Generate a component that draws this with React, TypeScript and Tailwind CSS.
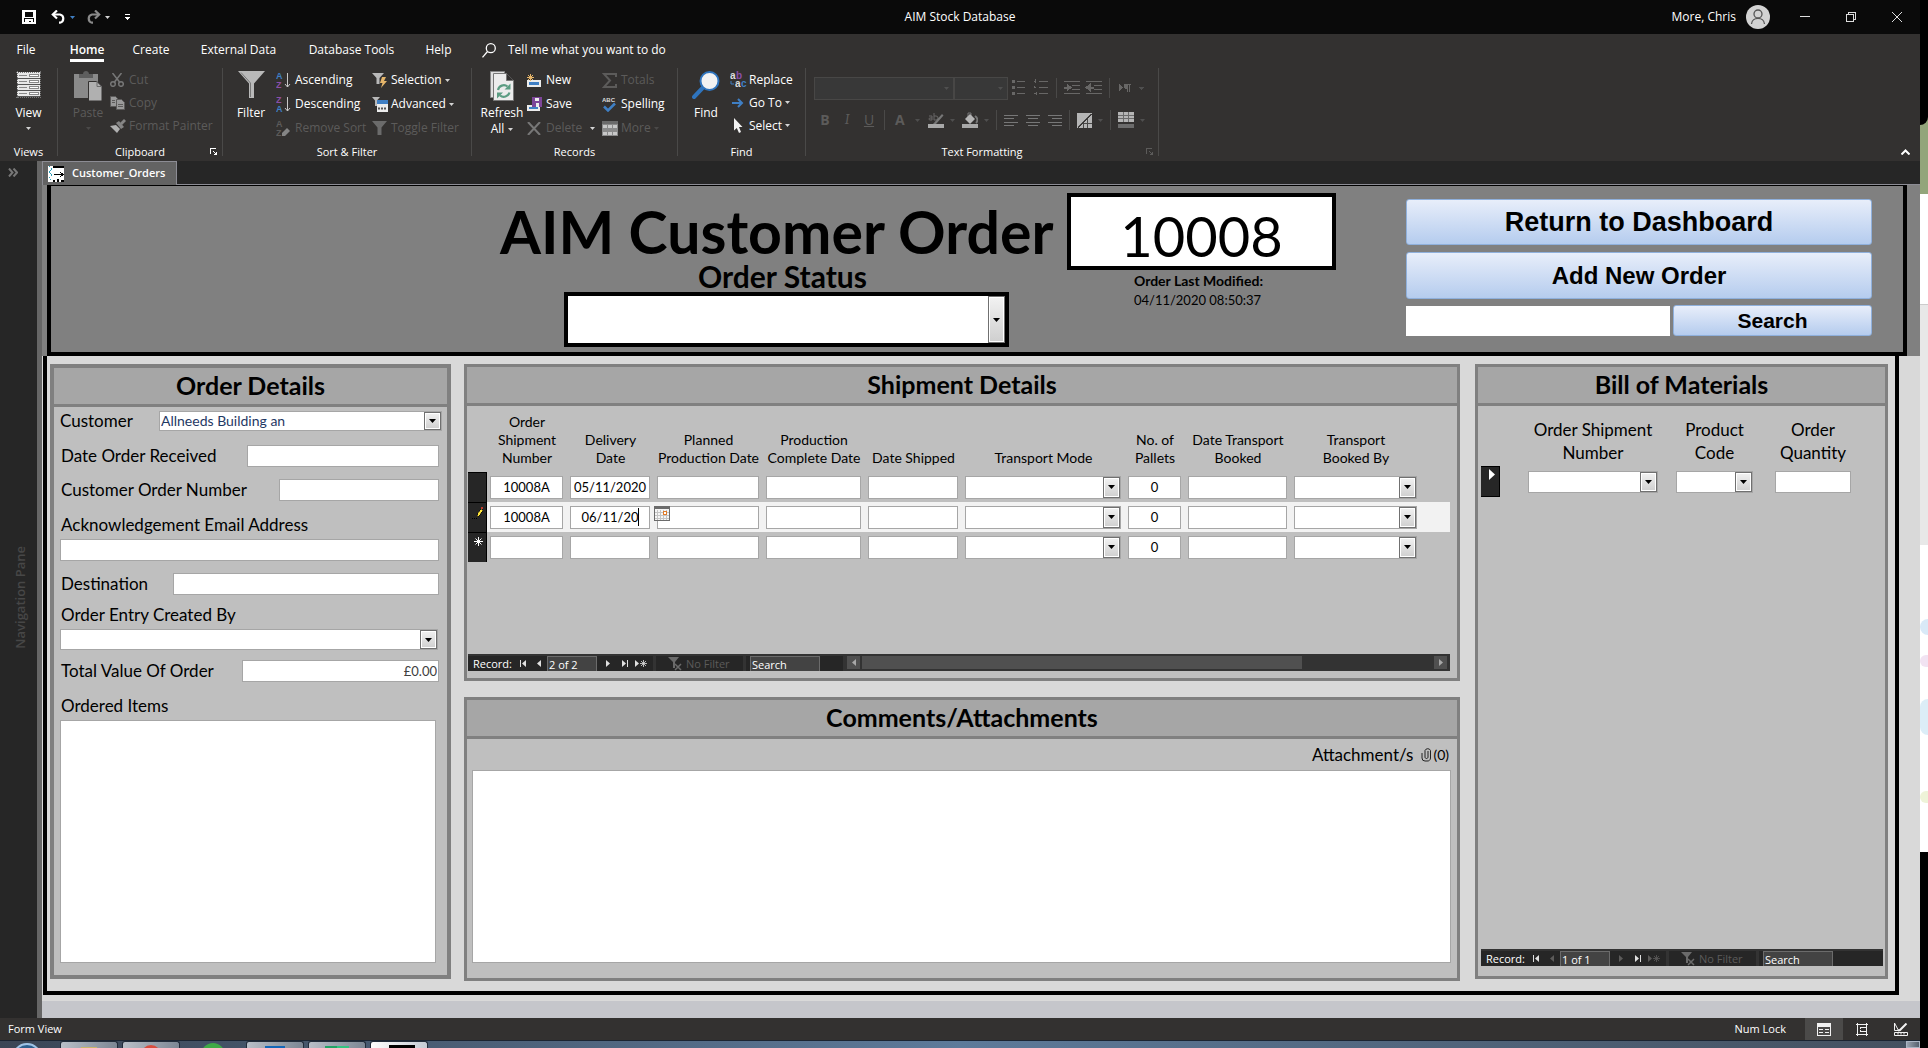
import type { ReactNode } from "react";

type NavBarProps = {
  position: string;
  first?: boolean;
  scroll?: boolean;
};

const DIM = "#5c5b5a";

function Caret({ color = "#d4d4d4" }: { color?: string }) {
  return (
    <svg width="5" height="3" viewBox="0 0 5 3" className="shrink-0">
      <path d="M0 0h5L2.5 3z" fill={color} />
    </svg>
  );
}

/* ---------- Title bar ---------- */

function TitleBar() {
  return (
    <header className="grid h-[34px] shrink-0 grid-cols-3 items-center bg-[#0a0a0a] text-xs text-white">
      <div className="flex items-center pl-[22px]">
        <button aria-label="Save" className="mr-[15px]">
          <svg width="14" height="14" viewBox="0 0 14 14" fill="none" stroke="#fff" strokeWidth="2" shapeRendering="crispEdges">
            <path d="M1 1h12v12H1z" />
            <path d="M1 7.5h12M2.500 1v6M11.500 1v6" strokeWidth="1" />
            <path d="M3 9h8v4H9v-2H7v2H3z" fill="#fff" stroke="none" />
          </svg>
        </button>
        <button aria-label="Undo" className="mr-1">
          <svg width="15" height="14" viewBox="0 0 15 14" fill="none" stroke="#fff" strokeWidth="2.200">
            <path d="M2 4.500h7a4.200 4.200 0 0 1 0 8.200H8" />
            <path d="M6 .5 1.800 4.500 6 8.500" />
          </svg>
        </button>
        <button aria-label="Undo list" className="mr-[11px]"><Caret color="#3f7fc4" /></button>
        <button aria-label="Redo" className="mr-1">
          <svg width="15" height="14" viewBox="0 0 15 14" fill="none" stroke="#8a8a8a" strokeWidth="2.200">
            <path d="M13 4.500H6a4.200 4.200 0 0 0 0 8.200h1" />
            <path d="M9 .5l4.200 4L9 8.500" />
          </svg>
        </button>
        <button aria-label="Redo list" className="mr-[15px]"><Caret /></button>
        <button aria-label="Customize toolbar">
          <svg width="5" height="6" viewBox="0 0 5 6" fill="#fff" shapeRendering="crispEdges">
            <path d="M0 0h5v1H0z" />
            <path d="M0 3h5L2.500 6z" />
          </svg>
        </button>
      </div>
      <div className="text-center">AIM Stock Database</div>
      <div className="flex items-center justify-end pr-[18px]">
        <span className="mr-2.5">More, Chris</span>
        <svg width="24" height="24" viewBox="0 0 24 24" fill="none" stroke="#555" strokeWidth="1.300" className="mr-[30px]">
          <circle cx="12" cy="12" r="12" fill="#d2d2d2" stroke="none" />
          <circle cx="12" cy="9" r="4" />
          <path d="M5.500 19c.5-7.500 12.500-7.500 13 0" />
        </svg>
        <button aria-label="Minimize" className="mr-9">
          <svg width="10" height="10" viewBox="0 0 10 10" stroke="#ddd"><path d="M0 4.500h10" /></svg>
        </button>
        <button aria-label="Restore" className="mr-9">
          <svg width="10" height="10" viewBox="0 0 10 10" fill="none" stroke="#ddd" shapeRendering="crispEdges">
            <path d="M.5 2.500h7v7h-7zM2.500 2.500v-2h7v7h-2" />
          </svg>
        </button>
        <button aria-label="Close">
          <svg width="10" height="10" viewBox="0 0 10 10" stroke="#ddd"><path d="M0 0l10 10M10 0L0 10" /></svg>
        </button>
      </div>
    </header>
  );
}

/* ---------- Ribbon ---------- */

const tabs = [
  { name: "File", width: "w-[52px]" },
  { name: "Home", width: "w-[70px]" },
  { name: "Create", width: "w-[58px]" },
  { name: "External Data", width: "w-[117px]" },
  { name: "Database Tools", width: "w-[109px]" },
  { name: "Help", width: "w-[65px]" },
];

function RibbonTabs() {
  return (
    <nav className="flex h-8 items-center text-xs">
      {tabs.map((tab) => (
        <button key={tab.name} className={`${tab.width} flex h-8 justify-center`}>
          <span
            className={
              tab.name === "Home"
                ? "h-7 border-b-[3px] border-white pt-2 font-semibold"
                : "h-7 pt-2"
            }
          >
            {tab.name}
          </span>
        </button>
      ))}
      <button className="ml-[11px] flex items-center gap-3">
        <svg width="14" height="15" viewBox="0 0 14 15" fill="none" stroke="#fff" strokeWidth="1.300">
          <circle cx="8.800" cy="5.200" r="4.500" />
          <path d="M5.500 8.500.5 14.300" />
        </svg>
        Tell me what you want to do
      </button>
    </nav>
  );
}

function Launcher({ color }: { color: string }) {
  return (
    <svg width="8" height="8" viewBox="0 0 8 8" fill="none" stroke={color} shapeRendering="crispEdges">
      <path d="M.5 6V.5H6M3 3l3 3" />
      <path d="M7 3v4H3z" fill={color} stroke="none" />
    </svg>
  );
}

type GroupProps = {
  label: string;
  width: string;
  launcher?: string;
  children: ReactNode;
};

function Group({ label, width, launcher, children }: GroupProps) {
  return (
    <section className={`${width} relative flex h-[88px] shrink-0 flex-col border-r border-[#4a4948]`}>
      <div className="flex h-[76px] shrink-0 items-start">{children}</div>
      <div className="shrink-0 text-center text-[11px] leading-4">{label}</div>
      {launcher && (
        <button aria-label={`${label} options`} className="absolute right-1 bottom-0">
          <Launcher color={launcher} />
        </button>
      )}
    </section>
  );
}

type BigButtonProps = {
  label: string;
  width: string;
  icon: ReactNode;
  dim?: boolean;
  caret?: "below" | "all";
};

function BigButton({ label, width, icon, dim, caret }: BigButtonProps) {
  return (
    <button className={`${width} flex flex-col items-center pt-[3px] leading-4 ${dim ? "text-[#5c5b5a]" : ""}`}>
      <span className="flex h-[34px] items-start">{icon}</span>
      <span>{label}</span>
      {caret === "below" && (
        <span className="pt-1.5">
          <Caret color={dim ? "#4a4948" : "#d4d4d4"} />
        </span>
      )}
      {caret === "all" && (
        <span className="flex items-center gap-1">
          All <Caret />
        </span>
      )}
    </button>
  );
}

type SmallButtonProps = {
  label: string;
  icon: ReactNode;
  dim?: boolean;
  caret?: "near" | "far";
  tall?: boolean;
};

function SmallButton({ label, icon, dim, caret, tall }: SmallButtonProps) {
  return (
    <button
      className={`flex items-center whitespace-nowrap ${tall ? "h-6" : "h-[23px]"} ${dim ? "text-[#5c5b5a]" : ""}`}
    >
      <span className="flex w-[19px] items-center">{icon}</span>
      {label}
      {caret && (
        <span className={caret === "far" ? "ml-2" : "ml-[3px]"}>
          <Caret color={dim && caret === "near" ? "#4a4948" : "#d4d4d4"} />
        </span>
      )}
    </button>
  );
}

function SortIcon({ top, bottom, topColor, bottomColor, erase }: {
  top: string;
  bottom: string;
  topColor: string;
  bottomColor: string;
  erase?: boolean;
}) {
  return (
    <svg width="15" height="17" viewBox="0 0 15 17" fontFamily="Liberation Sans" fontSize="9" fontWeight="700">
      <text x="0" y="7" fill={topColor}>{top}</text>
      <text x="0" y="16" fill={bottomColor}>{bottom}</text>
      {erase ? (
        <path d="M6 13l5-5 3 3-5 5H6z" fill="#858585" />
      ) : (
        <path d="M11.500 1v14M9 12l2.500 3L14 12" fill="none" stroke="#c8c8c8" />
      )}
    </svg>
  );
}

function ViewIcon() {
  return (
    <svg width="25" height="27" viewBox="0 0 25 27" shapeRendering="crispEdges">
      <path d="M1 1h23v25H1z" fill="#e8e8e8" />
      <path d="M1 0v27M24 0v27M0 1h25M0 26h25" stroke="#777" strokeDasharray="1 1" />
      {[3, 9, 15, 21].map((y) => (
        <g key={y}>
          <path d={`M3 ${y + 1}.500h8`} stroke="#888" />
          <path d={`M13.500 ${y}.500h9v2h-9z`} fill="#fff" stroke="#888" />
          <path d={`M1 ${y + 4}.500h23`} stroke="#555" />
        </g>
      ))}
    </svg>
  );
}

function PasteIcon() {
  return (
    <svg width="28" height="30" viewBox="0 0 28 30">
      <path d="M0 3h24v8H14v16H0z" fill="#8a8a8a" />
      <path d="M5 3h4c0-4 6-4 6 0h4v4H5z" fill="#5e5e5e" />
      <path d="M14.500 10.500h8.500l5 5V30H14.500z" fill="#b0b0b0" stroke="#333130" />
      <path d="M23 10v5.500h5" fill="none" stroke="#6b6b6b" />
    </svg>
  );
}

function FunnelIcon() {
  return (
    <svg width="27" height="27" viewBox="0 0 27 27">
      <path d="M0 0h27L16 12.500V27h-5V12.500z" fill="#b9b9b9" />
      <path d="M3 1.500l9.500 10.500v14" fill="none" stroke="#777" />
    </svg>
  );
}

function RefreshIcon() {
  return (
    <svg width="24" height="30" viewBox="0 0 24 30">
      <path d="M.5.500h14v26H.5z" fill="#e0e0e0" stroke="#888" />
      <path d="M3.500 2.500h13l7 7v20h-20z" fill="#ececec" stroke="#777" />
      <path d="M16.500 2.500v7h7" fill="#333130" stroke="#777" />
      <path d="M8 19a6 6 0 0 1 9.500-3.500M19.500 21.500A6 6 0 0 1 10 24.500" fill="none" stroke="#5b9c82" strokeWidth="2.200" />
      <path d="M20.500 12.500v6H14.500zM7 27.500v-6h6z" fill="#5b9c82" />
    </svg>
  );
}

function FindIcon() {
  return (
    <svg width="28" height="28" viewBox="0 0 28 28">
      <path d="M11.500 16 2 26" stroke="#2f74bd" strokeWidth="4" strokeLinecap="round" />
      <circle cx="17.500" cy="10" r="9" fill="#f2f2f2" stroke="#2f74bd" strokeWidth="2" />
    </svg>
  );
}

function FormatDivider() {
  return <span className="h-5 w-px bg-[#4a4948]" />;
}

function AlignIcon({ lines }: { lines: string }) {
  return (
    <svg width="14" height="11" viewBox="0 0 14 11" stroke="#777" shapeRendering="crispEdges">
      <path d={lines} />
    </svg>
  );
}

function TextFormatting() {
  return (
    <div className="w-full pt-2 pl-2">
      <div className="flex h-6 items-center">
        <div className="relative flex">
          <select disabled aria-label="Font" className="h-[23px] w-[140px] appearance-none border border-[#484746] bg-[#383838]" />
          <span className="absolute top-2.5 right-[5px]"><Caret color="#4f4f4f" /></span>
        </div>
        <div className="relative flex">
          <select disabled aria-label="Font size" className="h-[23px] w-[54px] appearance-none border border-[#484746] bg-[#383838]" />
          <span className="absolute top-2.5 right-[5px]"><Caret color="#4f4f4f" /></span>
        </div>
        <svg width="137" height="20" viewBox="0 0 137 20" className="ml-1" fill="none" stroke="#686766" shapeRendering="crispEdges">
          <path d="M5 3.500h8M5 9.500h8M5 15.500h8M27 3.500h9M27 9.500h9M27 15.500h9" />
          <path d="M0 3.500h3M0 9.500h3M0 15.500h3" strokeWidth="3" />
          <path d="M22 3.500h2M22 9.500h2M22 15.500h2M23.500 1v4M22 8v1M24 14v3" />
          <path d="M44.500 0v20M97.500 0v20" stroke="#4a4948" />
          <path d="M52 3.500h16M60 7.500h8M60 11.500h8M52 15.500h16" />
          <path d="M52 9.500h4" strokeWidth="2" />
          <path d="M55 6l4 3.500-4 3.500z" fill="#686766" />
          <path d="M74 3.500h16M82 7.500h8M82 11.500h8M74 15.500h16" />
          <path d="M78 9.500h4" strokeWidth="2" />
          <path d="M78 6l-4 3.500 4 3.500z" fill="#686766" />
          <path d="M107 5l4 4.500-4 4.500z" fill="#686766" stroke="none" />
          <path d="M119 6.500h-5M117.500 6v8M115.500 6v8" />
          <path d="M112 6h3v5h-2l-1-2z" fill="#686766" stroke="none" />
          <path d="M127 9h5l-2.500 3z" fill="#4f4f4f" stroke="none" />
        </svg>
      </div>
      <div className="mt-2 flex h-6 items-center text-sm text-[#5c5b5a]">
        <button aria-label="Bold" className="w-[22px] text-center font-bold">B</button>
        <button aria-label="Italic" className="w-[22px] text-center font-serif italic">I</button>
        <button aria-label="Underline" className="w-[22px] text-center underline">U</button>
        <span className="mr-2.5 ml-1 flex"><FormatDivider /></span>
        <button aria-label="Font color" className="mr-2.5 font-bold">A</button>
        <Caret color="#4f4f4f" />
        <button aria-label="Highlight" className="mr-1.5 ml-2">
          <svg width="16" height="16" viewBox="0 0 16 16">
            <path d="M1 4h3v4H2a1 1 0 0 1 0-2h2M6 1v7h2a2 2 0 0 0 0-4H6" fill="none" stroke="#686766" />
            <path d="M5 12 14 2l1.500 1.500L8 12z" fill="#777" />
            <path d="M0 12h16v4H0z" fill="#a8a8a8" />
          </svg>
        </button>
        <Caret color="#4f4f4f" />
        <button aria-label="Background color" className="mr-1.5 ml-[7px]">
          <svg width="16" height="16" viewBox="0 0 16 16">
            <path d="M6 5V1h3v3" fill="none" stroke="#777" />
            <path d="M8 2l5 5-5 5-5-5z" fill="#b5b5b5" />
            <path d="M13 4c3 2 3 5 1 7" stroke="#777" fill="none" strokeWidth="2" />
            <path d="M0 12h16v4H0z" fill="#a8a8a8" />
          </svg>
        </button>
        <Caret color="#4f4f4f" />
        <span className="mr-[7px] ml-[7px] flex"><FormatDivider /></span>
        <div className="flex gap-2">
          <button aria-label="Align left"><AlignIcon lines="M0 .5h14M0 3.500h10M0 7.500h14M0 10.500h10" /></button>
          <button aria-label="Center"><AlignIcon lines="M0 .5h14M2 3.500h10M0 7.500h14M2 10.500h10" /></button>
          <button aria-label="Align right"><AlignIcon lines="M0 .5h14M4 3.500h10M0 7.500h14M4 10.500h10" /></button>
        </div>
        <span className="mr-[7px] ml-[7px] flex"><FormatDivider /></span>
        <button aria-label="Gridlines" className="mr-1.5">
          <svg width="15" height="15" viewBox="0 0 15 15" shapeRendering="crispEdges">
            <path d="M0 0h15L0 15z" fill="#b5b5b5" />
            <path d="M15 1v14H1z" fill="#b5b5b5" />
            <path d="M14 1 1 14M7 10.500h8M10.500 6v9M6.500 10v5" stroke="#4a4948" />
          </svg>
        </button>
        <Caret color="#4f4f4f" />
        <span className="mr-[7px] ml-[7px] flex"><FormatDivider /></span>
        <button aria-label="Alternate row color" className="mr-1.5">
          <svg width="16" height="16" viewBox="0 0 16 16" shapeRendering="crispEdges">
            <path d="M0 0h16v10H0z" fill="#b5b5b5" />
            <path d="M0 3.500h16M0 6.500h16M5.500 0v10M10.500 0v10" stroke="#6b6b6b" />
            <path d="M0 12h16v4H0z" fill="#6b6b6b" />
          </svg>
        </button>
        <Caret color="#4f4f4f" />
      </div>
    </div>
  );
}

function Ribbon() {
  return (
    <div className="relative flex h-[127px] shrink-0 flex-col bg-[#333130] text-xs text-white">
      <RibbonTabs />
      <div className="mt-0.5 flex">
        <Group label="Views" width="w-[58px]">
          <BigButton label="View" width="w-[57px]" caret="below" icon={<ViewIcon />} />
        </Group>

        <Group label="Clipboard" width="w-[165px]" launcher="#fff">
          <BigButton label="Paste" width="ml-3 w-[36px]" dim caret="below" icon={<PasteIcon />} />
          <div className="ml-1">
            <SmallButton
              label="Cut"
              dim
              icon={
                <svg width="14" height="14" viewBox="0 0 14 14" fill="none" stroke="#777" strokeWidth="1.500">
                  <path d="M2.500 0l7 9M11.500 0l-7 9" />
                  <circle cx="3" cy="11" r="2.300" />
                  <circle cx="11" cy="11" r="2.300" />
                </svg>
              }
            />
            <SmallButton
              label="Copy"
              dim
              icon={
                <svg width="15" height="14" viewBox="0 0 15 14" fill="#9a9a9a" stroke="#5c5b5a">
                  <path d="M.5.500h5l3 3v7h-8z" />
                  <path d="M6.500 3.500h5l3 3v7h-8z" />
                  <path d="M2 4.500h3M2 6.500h3M8 8.500h5M8 10.500h5" />
                </svg>
              }
            />
            <SmallButton
              label="Format Painter"
              dim
              icon={
                <svg width="16" height="14" viewBox="0 0 16 14">
                  <path d="M0 7l6-1 4 4-3 4z" fill="#b0b0b0" />
                  <path d="M6 4l3-2 5 6-3 2z" fill="#858585" />
                  <path d="M10 4l4-4 2 2-4 4z" fill="#858585" />
                </svg>
              }
            />
          </div>
        </Group>

        <Group label="Sort & Filter" width="w-[249px]">
          <BigButton label="Filter" width="ml-2 w-10" icon={<FunnelIcon />} />
          <div className="ml-[5px] w-[96px]">
            <SmallButton tall label="Ascending" icon={<SortIcon top="A" bottom="Z" topColor="#3f7fc4" bottomColor="#8b4fa8" />} />
            <SmallButton tall label="Descending" icon={<SortIcon top="Z" bottom="A" topColor="#8b4fa8" bottomColor="#3f7fc4" />} />
            <SmallButton tall dim label="Remove Sort" icon={<SortIcon top="A" bottom="Z" topColor={DIM} bottomColor={DIM} erase />} />
          </div>
          <div>
            <SmallButton
              tall
              label="Selection"
              caret="near"
              icon={
                <svg width="16" height="15" viewBox="0 0 16 15">
                  <path d="M0 0h12L7.500 5v6h-3V5z" fill="#b9b9b9" />
                  <path d="M10 4h4l-2 4h3l-6 7 1.500-5H8z" fill="#e5b56a" />
                </svg>
              }
            />
            <SmallButton
              tall
              label="Advanced"
              caret="near"
              icon={
                <svg width="16" height="15" viewBox="0 0 16 15">
                  <path d="M0 0h8L5 3.500V9H3V3.500z" fill="#b9b9b9" />
                  <path d="M5 3h11v12H5z" fill="#ececec" />
                  <path d="M5 3h11v4H5z" fill="#3f7fc4" />
                  <path d="M6 11.500h8" stroke="#555" strokeWidth="2" strokeDasharray="2 1" />
                </svg>
              }
            />
            <SmallButton tall dim label="Toggle Filter" icon={<svg width="15" height="14" viewBox="0 0 15 14"><path d="M0 0h15L9.500 6.500V14h-4V6.500z" fill="#6b6b6b" /></svg>} />
          </div>
        </Group>

        <Group label="Records" width="w-[206px]">
          <BigButton label="Refresh" width="ml-[7px] w-[46px]" caret="all" icon={<RefreshIcon />} />
          <div className="ml-0.5 w-[75px]">
            <SmallButton
              tall
              label="New"
              icon={
                <svg width="14" height="13" viewBox="0 0 14 13">
                  <path d="M0 6h14v7H0z" fill="#ececec" />
                  <path d="M2 8h10v3H2z" fill="#3f7fc4" />
                  <path d="M3.500 0v7M0 3.500h7M1 1l5 5M6 1 1 6" stroke="#e5b56a" />
                </svg>
              }
            />
            <SmallButton
              tall
              label="Save"
              icon={
                <svg width="15" height="15" viewBox="0 0 15 15">
                  <path d="M0 8h13v6H0z" fill="#ececec" />
                  <path d="M2 10h9v2H2z" fill="#3f7fc4" />
                  <path d="M5 0h10v10H5z" fill="#7d4699" />
                  <path d="M8 1h4v3H8zM9 6h3v4H9z" fill="#ececec" />
                </svg>
              }
            />
            <SmallButton tall dim label="Delete" caret="far" icon={<svg width="14" height="13" viewBox="0 0 14 13" stroke="#777" strokeWidth="2"><path d="M1 0l12 13M13 0 1 13" /></svg>} />
          </div>
          <div>
            <SmallButton tall dim label="Totals" icon={<svg width="15" height="15" viewBox="0 0 15 15" fill="none" stroke="#5c5b5a" strokeWidth="2"><path d="M14 4V1H2l6 6.500L2 14h12v-3" /></svg>} />
            <SmallButton
              tall
              label="Spelling"
              icon={
                <svg width="15" height="16" viewBox="0 0 15 16">
                  <text x="0" y="6" fontSize="6" fontWeight="700" fontFamily="Liberation Sans" fill="#ddd">ABC</text>
                  <path d="M2 10.500l4 4L13 7.500" fill="none" stroke="#3f7fc4" strokeWidth="2.500" />
                </svg>
              }
            />
            <SmallButton
              tall
              dim
              label="More"
              caret="near"
              icon={
                <svg width="16" height="15" viewBox="0 0 16 15" shapeRendering="crispEdges">
                  <path d="M0 0h16v15H0z" fill="#8a8a8a" />
                  <path d="M0 0h16v3H0z" fill="#6b6b6b" />
                  <path d="M1 5.500h14M1 12.500h14" stroke="#c8c8c8" strokeWidth="3" strokeDasharray="4 1" />
                </svg>
              }
            />
          </div>
        </Group>

        <Group label="Find" width="w-[128px]">
          <BigButton label="Find" width="ml-2 w-[40px]" icon={<FindIcon />} />
          <div className="ml-1">
            <SmallButton
              label="Replace"
              icon={
                <svg width="17" height="17" viewBox="0 0 17 17" fontFamily="Liberation Sans" fontSize="10" fontWeight="700">
                  <text x="0" y="8" fill="#ddd">a</text>
                  <text x="6" y="8" fill="#8b4fa8">b</text>
                  <text x="5" y="16" fill="#ddd">a</text>
                  <text x="11" y="16" fill="#3f7fc4">c</text>
                  <path d="M1 10v3h3" fill="none" stroke="#3f7fc4" />
                </svg>
              }
            />
            <SmallButton label="Go To" caret="near" icon={<svg width="14" height="10" viewBox="0 0 14 10" fill="none" stroke="#3f7fc4" strokeWidth="2"><path d="M2 5h10M8 1l4 4-4 4" /></svg>} />
            <SmallButton label="Select" caret="near" icon={<svg width="14" height="15" viewBox="0 0 14 15"><path d="M4 0l8.500 9H9l2 5-2 1-2.200-5L4 12.500z" fill="#f2f2f2" /></svg>} />
          </div>
        </Group>

        <Group label="Text Formatting" width="w-[353px]" launcher={DIM}>
          <TextFormatting />
        </Group>
      </div>
      <button aria-label="Collapse the ribbon" className="absolute right-2.5 bottom-1.5">
        <svg width="9" height="6" viewBox="0 0 9 6" fill="none" stroke="#fff" strokeWidth="2">
          <path d="M.5 5.500l4-4 4 4" />
        </svg>
      </button>
    </div>
  );
}

/* ---------- Form controls ---------- */

type ComboProps = {
  label: string;
  id?: string;
  className: string;
  value?: string;
};

function ComboArrow() {
  return (
    <span className="pointer-events-none absolute top-0 right-0 bottom-0 flex w-[17px] items-center justify-center border border-[#707070] bg-linear-to-b from-[#f2f2f2] to-[#cfcfcf] ring-1 ring-white ring-inset">
      <svg width="7" height="4" viewBox="0 0 7 4"><path d="M0 0h7L3.500 4z" /></svg>
    </span>
  );
}

function Combo({ label, id, className, value }: ComboProps) {
  return (
    <div className={`${className} relative border border-[#a6a6a6] bg-white`}>
      <select
        id={id}
        aria-label={id ? undefined : label}
        className="block h-full w-full appearance-none pl-px text-sm leading-4 text-[#1f3864] outline-none"
      >
        <option>{value}</option>
      </select>
      <ComboArrow />
    </div>
  );
}

const fieldClass = "border border-[#a6a6a6] bg-white outline-none";

type FieldRowProps = {
  id: string;
  label: string;
  width: string;
  value?: string;
};

function FieldRow({ id, label, width, value }: FieldRowProps) {
  return (
    <div className="mr-[3px] flex h-[22px] items-center justify-between">
      <label htmlFor={id} className="pl-px">{label}</label>
      <input id={id} defaultValue={value} className={`${fieldClass} ${width} h-[22px] pr-px text-right text-[13px] text-[#404040]`} />
    </div>
  );
}

function PanelTitle({ children }: { children: ReactNode }) {
  return (
    <h2 className="flex h-[39px] shrink-0 items-center justify-center border-b-[3px] border-[#808080] bg-[#a6a6a6] pb-0.5 text-[25px] leading-7 font-bold">
      {children}
    </h2>
  );
}

function NavBar({ position, first, scroll }: NavBarProps) {
  const back = first ? "#5c5b5a" : "#e0e0e0";
  return (
    <div className="flex h-[17px] shrink-0 bg-[#333] pt-0.5 font-['Open_Sans','Noto_Sans',sans-serif] text-[11px] leading-[15px] text-white">
      <div className="flex items-center bg-[#262626] pl-[5px]">
        <span className="w-[42px]">Record:</span>
        <button aria-label="First record" className="w-4">
          <svg width="7" height="7" viewBox="0 0 7 7" fill="#e0e0e0" className="mx-auto"><path d="M0 0h1v7H0zM6 0v7L2 3.500z" /></svg>
        </button>
        <button aria-label="Previous record" className="w-4">
          <svg width="4" height="7" viewBox="0 0 4 7" fill={back} className="mx-auto"><path d="M4 0v7L0 3.500z" /></svg>
        </button>
        <input aria-label="Current record" defaultValue={position} className="h-[15px] w-[50px] border border-b-0 border-[#6b6b6b] bg-[#434343] pl-px outline-none" />
        <button aria-label="Next record" className="w-[22px]">
          <svg width="4" height="7" viewBox="0 0 4 7" fill={back} className="mx-auto"><path d="M0 0v7l4-3.500z" /></svg>
        </button>
        <button aria-label="Last record" className="w-3">
          <svg width="6" height="7" viewBox="0 0 6 7" fill="#e0e0e0" className="mx-auto"><path d="M5 0h1v7H5zM0 0v7l4-3.500z" /></svg>
        </button>
        <button aria-label="New record" className="mr-1 w-[18px] pl-1">
          <svg width="12" height="7" viewBox="0 0 12 7" fill={back} stroke={back}>
            <path d="M0 0v7l4-3.500z" stroke="none" />
            <path d="M8.500 0v7M5 3.500h7M6 1l5 5M11 1 6 6" strokeWidth=".8" />
          </svg>
        </button>
      </div>
      <div className="ml-[3px] flex w-[87px] shrink-0 items-center bg-[#262626] pl-3 text-[#5c5b5a]">
        <svg width="14" height="14" viewBox="0 0 14 14" className="mr-1 shrink-0">
          <path d="M0 0h11L7 5v6H5V5z" fill="#6b6b6b" />
          <path d="M7 7l6 6M13 7l-6 6" stroke="#6b6b6b" strokeWidth="1.500" />
        </svg>
        <span className="whitespace-nowrap">No Filter</span>
      </div>
      <div className={`${scroll ? "w-[97px]" : "flex-1"} ml-[3px] flex bg-[#262626] pl-1`}>
        <input aria-label="Search records" defaultValue="Search" className="h-[15px] w-[70px] border border-b-0 border-[#6b6b6b] bg-[#434343] pl-px outline-none" />
      </div>
      {scroll && (
        <div className="flex h-[13px] flex-1 pr-[3px] pl-1">
          <button aria-label="Scroll left" className="mr-0.5 flex w-[13px] items-center justify-center bg-[#505050]">
            <svg width="4" height="7" viewBox="0 0 4 7" fill="#a8a8a8"><path d="M4 0v7L0 3.500z" /></svg>
          </button>
          <div className="flex-1"><div className="h-full w-[77%] bg-[#505050]" /></div>
          <button aria-label="Scroll right" className="flex w-[13px] items-center justify-center bg-[#505050]">
            <svg width="4" height="7" viewBox="0 0 4 7" fill="#a8a8a8"><path d="M0 0v7l4-3.500z" /></svg>
          </button>
        </div>
      )}
    </div>
  );
}

/* ---------- Form header ---------- */

const actionClass =
  "rounded-[3px] border border-[#8fb0dc] bg-linear-to-b from-[#e8eefa] to-[#b5ccee] font-['Liberation_Sans',sans-serif] font-bold";

function FormHeader() {
  return (
    <div className="shrink-0 bg-[#808080] pr-[13px] pl-[5px]">
      <div className="flex h-[171px] items-start justify-end border-4 border-t border-black pr-[31px]">
        <div className="w-[551px]">
          <h1 className="pt-[18px] text-center text-[59px] leading-[56px] font-bold whitespace-nowrap">AIM Customer Order</h1>
          <div className="ml-16 w-[445px]">
            <label htmlFor="status" className="block pr-2 text-center text-[30px] leading-8 font-bold">Order Status</label>
            <div className="relative h-[55px] border-4 border-black bg-white">
              <select id="status" className="block h-full w-full appearance-none outline-none" />
              <ComboArrow />
            </div>
          </div>
        </div>
        <div className="mt-[7px] ml-4 w-[269px] text-center text-sm">
          <input
            aria-label="Order number"
            defaultValue="10008"
            className="block h-[77px] w-full border-4 border-black bg-white pt-2 text-center text-[56px] outline-none"
          />
          <div className="pr-1.5 leading-[22px] font-bold">Order Last Modified:</div>
          <div className="pr-2 text-[13px] leading-4">04/11/2020 08:50:37</div>
        </div>
        <div className="mt-[13px] ml-[70px] flex w-[466px] flex-col">
          <button className={`${actionClass} h-[46px] text-[27px]`}>Return to Dashboard</button>
          <button className={`${actionClass} mt-[7px] h-[47px] text-2xl`}>Add New Order</button>
          <div className="mt-1.5 flex h-[31px] gap-[3px]">
            <input aria-label="Search orders" className="mt-px w-[264px] bg-white outline-none" />
            <button className={`${actionClass} flex-1 text-[21px] leading-7`}>Search</button>
          </div>
        </div>
      </div>
    </div>
  );
}

/* ---------- Panels ---------- */

function OrderDetails() {
  return (
    <section className="mr-[13px] mb-0.5 flex w-[401px] shrink-0 flex-col border-4 border-[#808080] bg-[#bfbfbf]">
      <PanelTitle>Order Details</PanelTitle>
      <div className="flex flex-1 flex-col pt-1 pr-[5px] pb-3 pl-1.5 text-[17px] leading-6">
        <div className="flex h-5 items-center justify-between">
          <label htmlFor="customer">Customer</label>
          <Combo id="customer" label="Customer" className="h-5 w-[283px]" value="Allneeds Building an" />
        </div>
        <div className="mt-3.5 flex flex-col gap-3">
          <FieldRow id="received" label="Date Order Received" width="w-48" />
          <FieldRow id="number" label="Customer Order Number" width="w-40" />
          <div className="mr-[3px]">
            <label htmlFor="email" className="block pl-px">Acknowledgement Email Address</label>
            <input id="email" className={`${fieldClass} mt-0.5 block h-[22px] w-full text-sm`} />
          </div>
          <FieldRow id="destination" label="Destination" width="w-[266px]" />
        </div>
        <label htmlFor="created" className="mt-2 block pl-px">Order Entry Created By</label>
        <div className="mt-0.5 mb-2.5 flex pr-1">
          <Combo id="created" label="Order Entry Created By" className="h-[21px] flex-1" />
        </div>
        <FieldRow id="total" label="Total Value Of Order" width="w-[197px]" value="£0.00" />
        <label htmlFor="items" className="mt-3 block pl-px">Ordered Items</label>
        <textarea id="items" className={`${fieldClass} mt-0.5 mr-1.5 flex-1 resize-none`} />
      </div>
    </section>
  );
}

const shipmentColumns = [
  { label: "Order Shipment Number", width: "w-[80px]", kind: "text" },
  { label: "Delivery Date", width: "w-[87px] px-4", kind: "text" },
  { label: "Planned Production Date", width: "w-[109px]", kind: "text" },
  { label: "Production Complete Date", width: "w-[102px]", kind: "text" },
  { label: "Date Shipped", width: "w-[97px]", kind: "text" },
  { label: "Transport Mode", width: "w-[163px]", kind: "combo" },
  { label: "No. of Pallets", width: "w-[60px]", kind: "text" },
  { label: "Date Transport Booked", width: "w-[106px]", kind: "text" },
  { label: "Transport Booked By", width: "w-[130px] px-6", kind: "combo" },
];

const shipmentRows = [
  { state: "saved", values: ["10008A", "05/11/2020", "", "", "", "", "0", "", ""] },
  { state: "editing", values: ["10008A", "06/11/20", "", "", "", "", "0", "", ""] },
  { state: "new", values: ["", "", "", "", "", "", "0", "", ""] },
];

function RowMarker({ state }: { state: string }) {
  if (state === "editing") {
    return (
      <svg width="12" height="12" viewBox="0 0 12 12" className="ml-1" shapeRendering="crispEdges">
        <path d="M5 10l1-4 3-4 2 1-3 5z" fill="#ffe53b" stroke="#000" strokeWidth=".5" />
        <path d="M9 0h2v2H9z" fill="#c0392b" />
        <path d="M0 11.500h6" stroke="#000" strokeDasharray="1 1" />
      </svg>
    );
  }
  if (state === "new") {
    return (
      <svg width="9" height="9" viewBox="0 0 9 9" stroke="#fff" className="ml-1.5">
        <path d="M4.500 0v9M0 4.500h9M1.500 1.500l6 6M7.500 1.500l-6 6" />
      </svg>
    );
  }
  return null;
}

function CalendarIcon() {
  return (
    <svg width="16" height="16" viewBox="0 0 16 16" shapeRendering="crispEdges">
      <path d="M.5.500h15v14H.5z" fill="#f5f5f5" stroke="#6b6b6b" />
      <path d="M0 0h16v3H0z" fill="#6b6b6b" />
      <path d="M3.500 4v10M6.500 4v10M9.500 4v10M12.500 4v10M1 6.500h14M1 9.500h14M1 12.500h14" stroke="#c4c4c4" />
      <path d="M9.500 5.500h3v3h-3z" fill="#fff" stroke="#e07b2a" />
    </svg>
  );
}

function ShipmentDetails() {
  return (
    <section className="flex h-[317px] shrink-0 flex-col border-3 border-[#808080] bg-[#bfbfbf]">
      <PanelTitle>Shipment Details</PanelTitle>
      <div className="flex flex-1 flex-col justify-between pr-[7px] pb-[7px] pl-px">
        <table className="w-full table-fixed border-separate border-spacing-0">
          <thead>
            <tr className="h-[66px] align-bottom text-sm leading-[18px]">
              <th className="w-[19px]" />
              {shipmentColumns.map((col) => (
                <th key={col.label} className={`${col.width} pb-[5px] font-normal`}>{col.label}</th>
              ))}
              <th />
            </tr>
          </thead>
          <tbody>
            {shipmentRows.map((row) => (
              <tr key={row.state} className={row.state === "editing" ? "h-[30px] bg-[#f2f2f2]" : "h-[30px]"}>
                <td className="border-t border-r border-black bg-[#262626] p-0 pt-1 align-top">
                  <RowMarker state={row.state} />
                </td>
                {shipmentColumns.map((col, i) => (
                  <td key={col.label} className="relative py-0 pr-1 pl-[3px]">
                    {col.kind === "combo" ? (
                      <Combo label={col.label} className="h-[23px]" />
                    ) : (
                      <input
                        aria-label={col.label}
                        defaultValue={row.values[i]}
                        className={`${fieldClass} block h-[23px] w-full text-center text-[13px]`}
                      />
                    )}
                    {row.state === "editing" && i === 1 && (
                      <>
                        <span className="absolute top-1.5 right-[15px] h-[18px] w-px bg-black" />
                        <button aria-label="Pick a date" className="absolute top-1 -right-4 z-10"><CalendarIcon /></button>
                      </>
                    )}
                  </td>
                ))}
                <td />
              </tr>
            ))}
          </tbody>
        </table>
        <NavBar position="2 of 2" scroll />
      </div>
    </section>
  );
}

function Comments() {
  return (
    <section className="mt-4 flex flex-1 flex-col border-3 border-[#808080] bg-[#bfbfbf]">
      <PanelTitle>Comments/Attachments</PanelTitle>
      <div className="flex flex-1 flex-col pr-1.5 pb-[15px] pl-[5px]">
        <div className="flex h-[31px] items-center justify-end pr-0.5">
          <label htmlFor="comments" className="text-[17px]">Attachment/s</label>
          <button className="ml-2 flex items-center gap-px text-sm">
            <svg width="11" height="15" viewBox="0 0 11 15" fill="none" stroke="#222">
              <path d="M1 6v5a3 3 0 0 0 3 3h2a3 3 0 0 0 3.500-3V3.500a3 3 0 0 0-5.500 0V10c0 2 3 2 3 0V4" />
            </svg>
            (0)
          </button>
        </div>
        <textarea id="comments" className={`${fieldClass} flex-1 resize-none`} />
      </div>
    </section>
  );
}

const materialColumns = [
  { label: "Order Shipment Number", cell: "w-[162px] pr-1 pl-7", kind: "combo" },
  { label: "Product Code", cell: "w-[95px] pr-1 pl-3.5", kind: "combo" },
  { label: "Order Quantity", cell: "w-[98px] pr-1 pl-[18px]", kind: "text" },
];

function BillOfMaterials() {
  return (
    <section className="mb-0.5 ml-[15px] flex w-[413px] shrink-0 flex-col border-3 border-[#808080] bg-[#bfbfbf]">
      <PanelTitle>Bill of Materials</PanelTitle>
      <div className="flex flex-1 flex-col justify-between pr-0.5 pb-2.5 pl-[3px]">
        <table className="w-full table-fixed border-separate border-spacing-0">
          <thead>
            <tr className="h-[60px] align-bottom text-[17px] leading-[23px]">
              <th className="w-[19px]" />
              {materialColumns.map((col) => (
                <th key={col.label} className={`${col.cell} pb-0.5 font-normal`}>{col.label}</th>
              ))}
              <th />
            </tr>
          </thead>
          <tbody>
            <tr className="h-[31px]">
              <td className="border-y border-r border-black bg-[#262626] p-0 pt-0.5 align-top">
                <svg width="6" height="11" viewBox="0 0 6 11" fill="#fff" className="ml-2"><path d="M0 0v11l6-5.500z" /></svg>
              </td>
              {materialColumns.map((col) => (
                <td key={col.label} className={`${col.cell} py-0`}>
                  {col.kind === "combo" ? (
                    <Combo label={col.label} className="h-[22px]" />
                  ) : (
                    <input aria-label={col.label} className={`${fieldClass} block h-[22px] w-full text-[13px]`} />
                  )}
                </td>
              ))}
              <td />
            </tr>
          </tbody>
        </table>
        <NavBar position="1 of 1" first />
      </div>
    </section>
  );
}

/* ---------- Document area ---------- */

function DocumentTab() {
  return (
    <div className="flex h-6 shrink-0 bg-[#262626]">
      <button className="flex w-[135px] items-center gap-2 border border-b-0 border-[#8c8c94] bg-[#636363] pl-[5px] text-[11px] font-semibold text-white">
        <svg width="16" height="16" viewBox="0 0 16 16" shapeRendering="crispEdges">
          <path d="M0 0h16v16H0z" fill="#fff" />
          <path d="M1 0l3 3-3 3 3 3-3 3 3 3" fill="none" stroke="#2a9db8" strokeDasharray="2 1" />
          <path d="M5 0h11v2H5zM5 14h2v2H5zM9 13h2v3H9zM13 14h3v2h-3z" />
          <path d="M6 8.500h9M12 6l3 2.500-3 2.500" fill="none" stroke="#000" />
        </svg>
        Customer_Orders
      </button>
      <div className="flex-1 border-b border-[#8c8c94]" />
    </div>
  );
}

function NavigationPane() {
  return (
    <aside className="flex w-[42px] shrink-0 flex-col border-r-[5px] border-[#666] bg-[#262626]">
      <button aria-label="Open navigation pane" className="mt-[7px] ml-2">
        <svg width="10" height="9" viewBox="0 0 10 9" fill="none" stroke="#777" strokeWidth="2">
          <path d="M1 .5l3.500 4L1 8.500M5.500.500l3.500 4-3.500 4" />
        </svg>
      </button>
      <div className="flex flex-1 items-center justify-center pl-1">
        <span className="rotate-180 text-[13px] font-semibold text-[#474747] [writing-mode:vertical-rl]">Navigation Pane</span>
      </div>
    </aside>
  );
}

/* ---------- Bottom bars ---------- */

function StatusBar() {
  return (
    <footer className="flex h-[22px] shrink-0 items-center justify-between bg-[#333130] pl-2 text-[11px] text-white">
      <span>Form View</span>
      <div className="flex h-full items-center">
        <span className="mr-[19px]">Num Lock</span>
        <button aria-label="Form View" className="flex h-full w-[38px] items-center justify-center bg-[#4b4a49]">
          <svg width="14" height="13" viewBox="0 0 14 13" fill="none" stroke="#f2f2f2" shapeRendering="crispEdges">
            <path d="M.5.500h13v12H.5zM2 6.500h4M8 6.500h4M2 9.500h4M8 9.500h4" />
            <path d="M0 0h14v4H0z" fill="#f2f2f2" stroke="none" />
          </svg>
        </button>
        <button aria-label="Layout View" className="flex h-full w-[38px] items-center justify-center">
          <svg width="12" height="13" viewBox="0 0 12 13" fill="none" stroke="#f2f2f2" shapeRendering="crispEdges">
            <path d="M0 1.500h12M0 11.500h12M1.500 0v13M10.500 0v13M4 4.500h6M4 8.500h6M4.500 4v2M4.500 7v2" />
          </svg>
        </button>
        <button aria-label="Design View" className="flex h-full w-[39px] items-center justify-center">
          <svg width="14" height="13" viewBox="0 0 14 13" fill="none" stroke="#f2f2f2">
            <path d="M.5 0v7.500h4zM.5 9.500h13v3H.5zM4 10v1.500M7 10v1.500M10 10v1.500" />
            <path d="M12.500.500 6 7l-2 .5" strokeWidth="2" />
          </svg>
        </button>
      </div>
    </footer>
  );
}

const taskButtonClass = "flex w-[58px] justify-center overflow-hidden rounded-t-[3px] border border-b-0 border-[#222c3a] bg-linear-to-r from-[#b9bfc8] to-[#7d8794]";

function Taskbar() {
  return (
    <div className="flex h-2 shrink-0 gap-1 overflow-hidden border-t border-[#1b2431] bg-linear-to-r from-[#3b4656] via-[#5d7a9a] to-[#44505f]">
      <div className="w-14">
        <div className="mt-0.5 ml-3 size-[30px] rounded-full border-2 border-[#9fc3e6] bg-[#2d5f8e]" />
      </div>
      <div className={taskButtonClass}><div className="mt-[5px] h-2 w-4 bg-[#c9b56a]" /></div>
      <div className={taskButtonClass}><div className="mt-[3px] size-5 shrink-0 rounded-full bg-[#d94c3d]" /></div>
      <div className="flex w-[58px] justify-center"><div className="mt-0.5 size-6 shrink-0 rounded-full bg-[#3faa46]" /></div>
      <div className={taskButtonClass}><div className="mt-1 h-2 w-5 bg-[#1266b8]" /></div>
      <div className={taskButtonClass}><div className="mt-1 h-2 w-6 bg-linear-to-r from-[#21a366] from-50% to-[#33c481] to-50%" /></div>
      <div className="flex w-[58px] justify-end rounded-t-[3px] border border-b-0 border-[#222c3a] bg-linear-to-r from-white to-[#c5cbd4] pr-3">
        <div className="mt-[3px] h-2 w-[26px] bg-black" />
      </div>
      <div className="flex-1" />
      <div className="w-[14px] border border-[#aab4c4] bg-linear-to-r from-[#9aa3b0] to-[#56606e]" />
    </div>
  );
}

// Sliver of the window that sits behind this one
function BackgroundWindow() {
  return (
    <div className="flex w-2 shrink-0 flex-col bg-black">
      <div className="h-[194px] bg-[#93a57b]">
        <div className="h-[125px] rounded-br-lg bg-black" />
      </div>
      <div className="h-[111px] border-b border-[#ccc] bg-white" />
      <div className="h-[240px] bg-[#e8e8e8]" />
      <div className="flex h-[307px] flex-col bg-white pt-[74px]">
        <div className="h-4 rounded-l-full bg-[#d9e9f7]" />
        <div className="mt-5 h-3 rounded-l-full bg-[#f1e3f2]" />
        <div className="mt-8 h-9 rounded-l-full bg-[#dcedf7]" />
        <div className="mt-14 h-3 rounded-l-full bg-[#eef3d8]" />
      </div>
    </div>
  );
}

export default function App() {
  return (
    <div className="flex h-screen w-full overflow-hidden font-['Open_Sans','Noto_Sans',sans-serif]">
      <div className="flex min-w-0 flex-1 flex-col">
        <TitleBar />
        <Ribbon />
        <div className="flex min-h-0 flex-1">
          <NavigationPane />
          <main className="flex min-w-0 flex-1 flex-col bg-[#c5c6cb]">
            <DocumentTab />
            <div className="flex min-h-0 flex-1 flex-col font-['Lato',sans-serif] text-black">
              <FormHeader />
              <div className="mb-[17px] flex flex-1 flex-col bg-[#d9d9d9] pr-[21px] pb-1.5 pl-px">
                <div className="flex flex-1 border-4 border-t-0 border-black pt-2 pr-[7px] pb-2.5 pl-[3px]">
                  <OrderDetails />
                  <div className="flex min-w-0 flex-1 flex-col">
                    <ShipmentDetails />
                    <Comments />
                  </div>
                  <BillOfMaterials />
                </div>
              </div>
            </div>
          </main>
        </div>
        <StatusBar />
        <Taskbar />
      </div>
      <BackgroundWindow />
    </div>
  );
}
